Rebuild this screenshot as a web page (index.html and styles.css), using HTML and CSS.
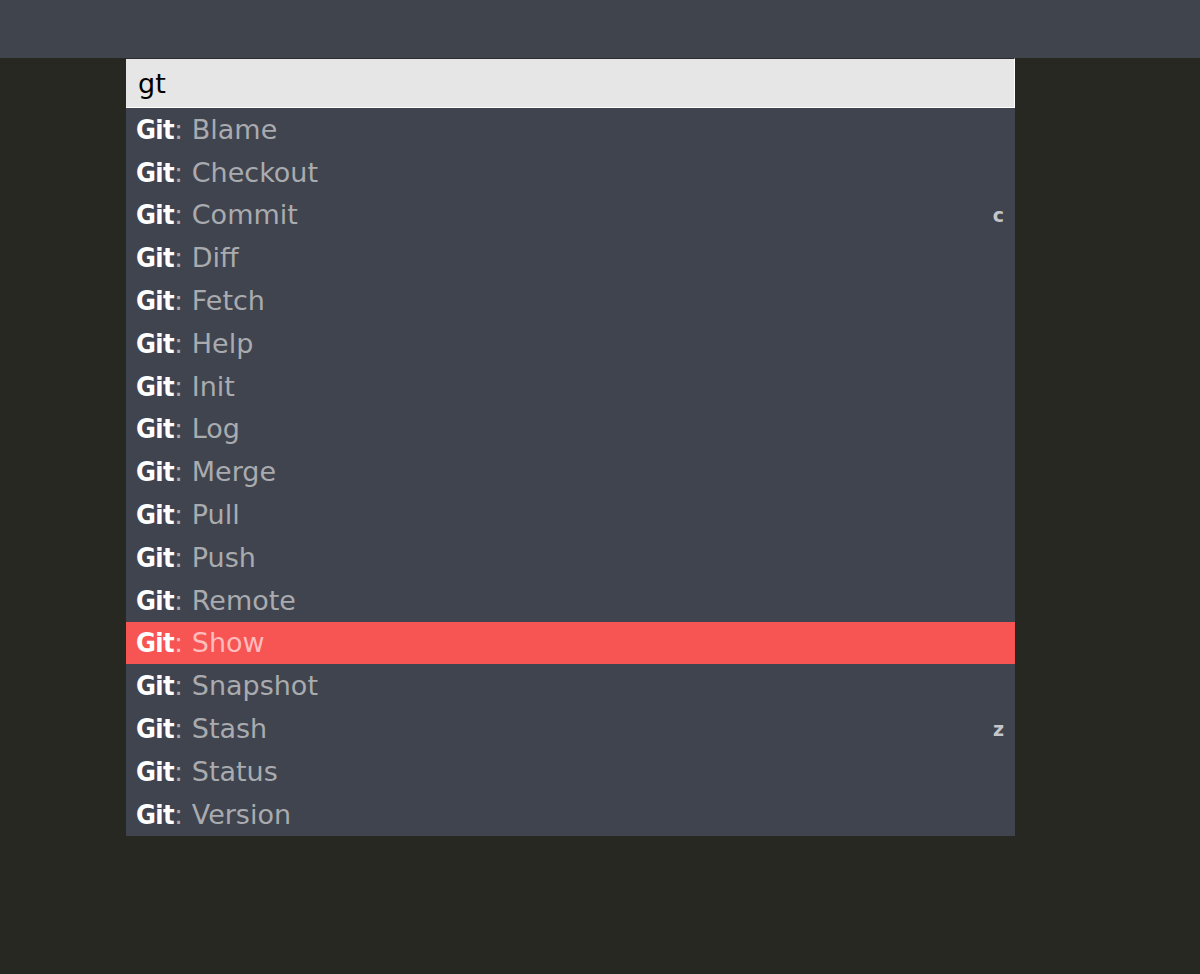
FILE: index.html
```html
<!DOCTYPE html>
<html>
<head>
<meta charset="utf-8">
<link rel="stylesheet" href="styles.css">
</head>
<body>
<div class="topbar"></div>
<div class="stage">
  <div class="palette">
    <div class="input">gt</div>
    <ul class="list">
      <li class="row"><span class="name"><b>Git</b>: Blame</span></li>
      <li class="row"><span class="name"><b>Git</b>: Checkout</span></li>
      <li class="row"><span class="name"><b>Git</b>: Commit</span><span class="key">c</span></li>
      <li class="row"><span class="name"><b>Git</b>: Diff</span></li>
      <li class="row"><span class="name"><b>Git</b>: Fetch</span></li>
      <li class="row"><span class="name"><b>Git</b>: Help</span></li>
      <li class="row"><span class="name"><b>Git</b>: Init</span></li>
      <li class="row"><span class="name"><b>Git</b>: Log</span></li>
      <li class="row"><span class="name"><b>Git</b>: Merge</span></li>
      <li class="row"><span class="name"><b>Git</b>: Pull</span></li>
      <li class="row"><span class="name"><b>Git</b>: Push</span></li>
      <li class="row"><span class="name"><b>Git</b>: Remote</span></li>
      <li class="row selected"><span class="name"><b>Git</b>: Show</span></li>
      <li class="row"><span class="name"><b>Git</b>: Snapshot</span></li>
      <li class="row"><span class="name"><b>Git</b>: Stash</span><span class="key">z</span></li>
      <li class="row"><span class="name"><b>Git</b>: Status</span></li>
      <li class="row"><span class="name"><b>Git</b>: Version</span></li>
    </ul>
  </div>
</div>
</body>
</html>
```

FILE: styles.css
```css
html, body {
  margin: 0;
  padding: 0;
  height: 100%;
}
body {
  background: #272822;
  font-family: "DejaVu Sans", "Liberation Sans", sans-serif;
}
.topbar {
  height: 58px;
  background: #40444c;
}
.stage {
  padding-left: 126px;
}
.palette {
  width: 889px;
  background: #40444e;
}
.input {
  height: 50px;
  box-sizing: border-box;
  background: #e6e6e6;
  border-top: 1px solid #2a2c30;
  border-right: 1px solid #ffffff;
  border-bottom: 1px solid #ffffff;
  padding-left: 12px;
  display: flex;
  align-items: center;
  font-size: 27px;
  color: #000;
}
.list {
  list-style: none;
  margin: 0;
  padding: 0;
}
.row {
  height: 42.8px;
  display: flex;
  align-items: center;
  justify-content: space-between;
  padding: 0 11px 0 10px;
  font-size: 27px;
  color: #a9abaf;
  white-space: nowrap;
}
.row b {
  color: #ffffff;
  font-family: "DejaVu Sans Condensed", "DejaVu Sans", sans-serif;
  font-stretch: condensed;
  font-weight: bold;
  letter-spacing: -0.6px;
}
.row.selected {
  background: #f75454;
  color: #ffbcbc;
}
.key {
  font-size: 19px;
  color: #c4c6ca;
  font-weight: bold;
}
```
